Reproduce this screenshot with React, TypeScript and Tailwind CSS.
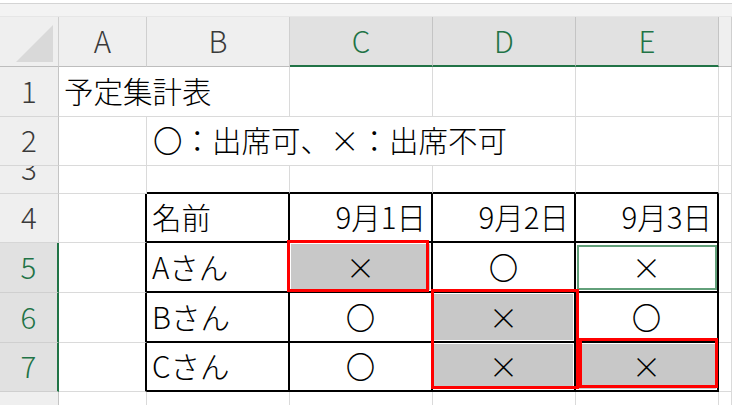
import React from "react";

const colHdr =
  "flex items-end justify-center overflow-hidden pb-[11px] bg-[#efefef] text-[#3a3a3a] border-r border-b border-r-[#cfcfcf] border-b-[#bdbdbd]";
const colHdrSel =
  "flex items-end justify-center overflow-hidden pb-[10px] bg-[#e1e1e1] text-[#217346] border-r border-b-2 border-r-[#c4c4c4] border-b-[#217346]";
const rowHdr =
  "flex items-end justify-center overflow-hidden pb-[11px] bg-[#efefef] text-[#3a3a3a] border-r border-b border-r-[#c4c4c4] border-b-[#d6d6d6]";
const rowHdrSel =
  "flex items-end justify-center overflow-hidden pb-[11px] bg-[#e1e1e1] text-[#217346] border-r-2 border-b border-r-[#217346] border-b-[#cfcfcf]";
const grid = "border-r border-b border-[#dadada]";
const aEdge = "border-r-2 border-b border-r-black border-b-[#dadada]";
const topEdge = "border-r border-b-2 border-r-[#dadada] border-b-black";
const tLeft = "flex items-end pl-[5px] pb-[10px] border-r-2 border-b-2 border-black";
const tRight = "flex items-end justify-end pr-[5px] pb-[10px] border-r-2 border-b-2 border-black";
const tSym = "flex items-end justify-center pb-[10px] border-r-2 border-b-2 border-black";
const tSymGray =
  "flex items-end justify-center pb-[10px] border-r-2 border-b-2 border-black bg-[#c8c8c8] shadow-[inset_0_0_0_1px_#ffffff]";

function RH({ n, sel }: { n: string; sel?: boolean }) {
  return <div className={sel ? rowHdrSel : rowHdr}>{n}</div>;
}

export default function App() {
  return (
    <div className="relative w-[732px] h-[405px] overflow-hidden bg-white font-['Noto_Sans_CJK_JP',sans-serif] font-light text-[29.5px] leading-none text-black">
      <div className="h-[3px] bg-white" />
      <div className="h-px bg-[#d4d4d4]" />
      <div className="h-[13px] bg-[#f3f3f3] border-b border-b-[#e6e6e6]" />
      <div className="grid grid-cols-[59px_88px_143px_143px_143px_143px_1fr] grid-rows-[50px_50px_49px_28px_49px_50px_50px_49px_49px]">
        {/* header row */}
        <div className="relative bg-[#efefef] border-r border-b border-r-[#cfcfcf] border-b-[#bdbdbd]">
          <svg className="absolute left-0 top-0" width="58" height="49" viewBox="0 0 58 49">
            <polygon points="16,45 53,45 53,8" fill="#d9d9d9" />
          </svg>
        </div>
        <div className={colHdr}>A</div>
        <div className={colHdr}>B</div>
        <div className={colHdrSel}>C</div>
        <div className={colHdrSel}>D</div>
        <div className={colHdrSel}>E</div>
        <div className={colHdr}></div>

        {/* row 1 */}
        <RH n="1" />
        <div className="flex items-end whitespace-nowrap pl-[5px] pb-[11px] border-b border-b-[#dadada]">予定集計表</div>
        <div className={grid} />
        <div className={grid} />
        <div className={grid} />
        <div className={grid} />
        <div className={grid} />

        {/* row 2 */}
        <RH n="2" />
        <div className={grid} />
        <div className="flex items-end whitespace-nowrap pl-[6px] pb-[11px] border-b border-b-[#dadada]">
          <span>
            〇：出席可、<span className="inline-block w-[1em] text-center">×</span>：出席不可
          </span>
        </div>
        <div className="border-b border-b-[#dadada]" />
        <div className={grid} />
        <div className={grid} />
        <div className={grid} />

        {/* row 3 */}
        <RH n="3" />
        <div className={grid} />
        <div className={topEdge} />
        <div className={topEdge} />
        <div className={topEdge} />
        <div className={topEdge} />
        <div className={grid} />

        {/* row 4 */}
        <RH n="4" />
        <div className={aEdge} />
        <div className={tLeft}>名前</div>
        <div className={tRight}>9月1日</div>
        <div className={tRight}>9月2日</div>
        <div className={tRight}>9月3日</div>
        <div className={grid} />

        {/* row 5 */}
        <RH n="5" sel />
        <div className={aEdge} />
        <div className={tLeft}>Aさん</div>
        <div className={tSymGray}>×</div>
        <div className={tSym}>〇</div>
        <div className={`relative ${tSym}`}>
          ×
          <div className="absolute left-[1px] top-[2px] w-[140px] h-[45px] border-2 border-[#62a07a]" />
        </div>
        <div className={grid} />

        {/* row 6 */}
        <RH n="6" sel />
        <div className={aEdge} />
        <div className={tLeft}>Bさん</div>
        <div className={tSym}>〇</div>
        <div className={tSymGray}>×</div>
        <div className={tSym}>〇</div>
        <div className={grid} />

        {/* row 7 */}
        <RH n="7" sel />
        <div className={aEdge} />
        <div className={tLeft}>Cさん</div>
        <div className={tSym}>〇</div>
        <div className={tSymGray}>×</div>
        <div className={tSymGray}>×</div>
        <div className={grid} />

        {/* row 8 */}
        <RH n="8" />
        <div className={grid} />
        <div className={grid} />
        <div className={grid} />
        <div className={grid} />
        <div className={grid} />
        <div className={grid} />
      </div>

      {/* red highlight boxes */}
      <div className="absolute left-[287px] top-[240px] w-[142px] h-[52px] border-[3px] border-[#ff0000]" />
      <div className="absolute left-[431px] top-[289px] w-[148px] h-[100px] border-[3px] border-[#ff0000]" />
      <div className="absolute left-[579px] top-[338px] w-[139px] h-[50px] border-[3px] border-[#ff0000]" />
    </div>
  );
}
